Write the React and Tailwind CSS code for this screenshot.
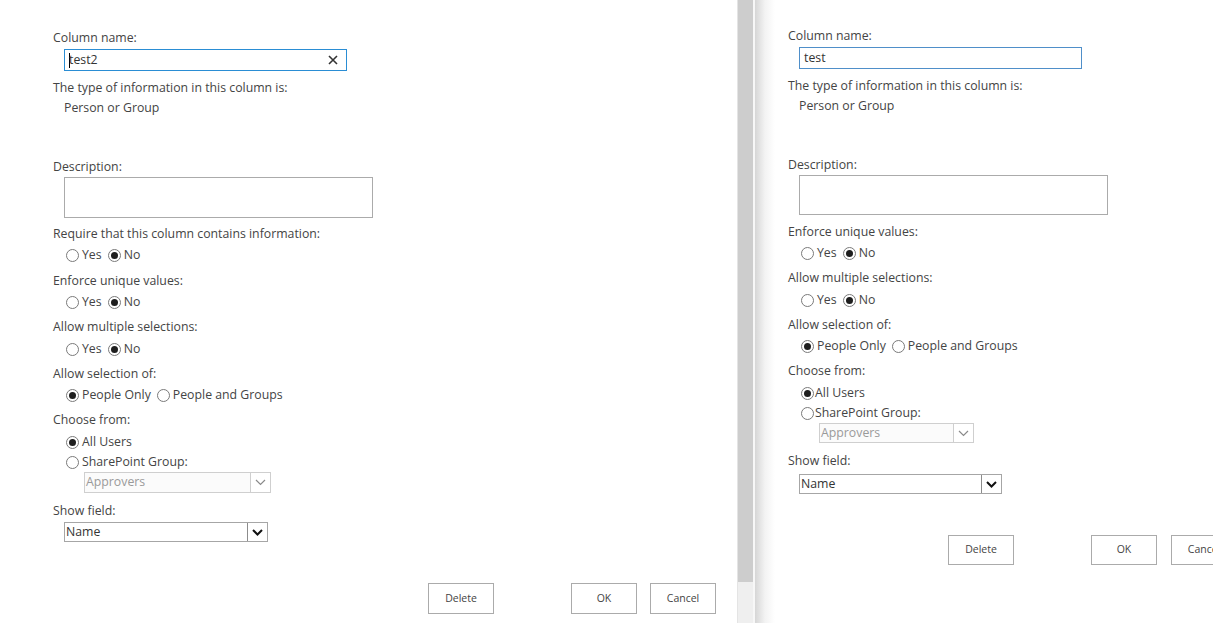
import React from 'react';

const Row = ({ className = '', children }) => (
  <div className={`h-5 leading-[21px] whitespace-nowrap ${className}`}>{children}</div>
);

const Radio = ({ checked, label, tight }) => (
  <span className="inline-flex items-center">
    <span className="w-[13px] h-[13px] rounded-full border border-[#7a7a7a] bg-white flex items-center justify-center">
      {checked && <span className="w-[7px] h-[7px] rounded-full bg-[#1e1e1e]" />}
    </span>
    <span className={tight ? 'ml-[1px]' : 'ml-[3px]'}>{label}</span>
  </span>
);

const RadioRow = ({ className = '', children }) => (
  <div className={`h-5 flex items-center gap-[6px] pl-[13px] whitespace-nowrap ${className}`}>{children}</div>
);

const Chevron = ({ disabled }) => (
  <svg width="11" height="7" viewBox="0 0 11 7">
    <polyline
      points="1,1 5.5,5.5 10,1"
      fill="none"
      stroke={disabled ? '#8a8a8a' : '#111'}
      strokeWidth={disabled ? 1.2 : 2}
    />
  </svg>
);

const Select = ({ value, width, disabled, className = '', h }) => (
  <div
    className={`flex items-stretch border ${h} ${className} ${
      disabled ? 'border-[#cfcfcf] bg-[#fbfbfb] text-[#9a9a9a]' : 'border-[#a6a6a6] bg-white text-[#333]'
    }`}
    style={{ width }}
  >
    <div className="flex-1 flex items-center pl-[1px] leading-none">{value}</div>
    <div
      className={`w-[20px] flex items-center justify-center border-l ${
        disabled ? 'border-[#cfcfcf] bg-white' : 'border-[#8c8c8c] bg-white'
      }`}
    >
      <Chevron disabled={disabled} />
    </div>
  </div>
);

const Button = ({ children, className = '', h }) => (
  <div
    className={`w-[66px] shrink-0 ${h} border border-[#ababab] bg-white flex items-center justify-center text-[10.5px] text-[#444] ${className}`}
  >
    {children}
  </div>
);

const Form = ({ right }) => {
  return (
    <div className={right ? 'pt-[25px] pl-[33px]' : 'pt-[27px] pl-[53px]'}>
      <Row>Column name:</Row>
      <div
        className={`mt-[2px] ml-[11px] w-[283px] h-[22px] border bg-white flex items-center px-[4px] ${
          right ? 'border-[#4f8fc9]' : 'border-[#2a8dd4]'
        }`}
      >
        {!right && <span className="w-[1px] h-[15px] bg-black -mr-[1px]" />}
        <span className="flex-1 text-[#333]">{right ? 'test' : 'test2'}</span>
        {!right && (
          <svg width="10" height="10" viewBox="0 0 10 10" className="mr-[4px]">
            <path d="M1 1 L9 9 M9 1 L1 9" stroke="#333" strokeWidth="1.6" />
          </svg>
        )}
      </div>
      <Row className="mt-[6px]">The type of information in this column is:</Row>
      <Row className="pl-[11px]">Person or Group</Row>
      <Row className="mt-[39px]">Description:</Row>
      <div className={`mt-[1px] ml-[11px] w-[309px] border border-[#ababab] bg-white ${right ? 'h-[40px]' : 'h-[41px]'}`} />
      {!right && (
        <>
          <Row className="mt-[5px]">Require that this column contains information:</Row>
          <RadioRow className="mt-[2px]">
            <Radio label="Yes" />
            <Radio checked label="No" />
          </RadioRow>
        </>
      )}
      <Row className={right ? 'mt-[6px]' : 'mt-[5px]'}>Enforce unique values:</Row>
      <RadioRow className="mt-[2px]">
        <Radio label="Yes" />
        <Radio checked label="No" />
      </RadioRow>
      <Row className="mt-[4px]">Allow multiple selections:</Row>
      <RadioRow className="mt-[3px]">
        <Radio label="Yes" />
        <Radio checked label="No" />
      </RadioRow>
      <Row className="mt-[4px]">Allow selection of:</Row>
      <RadioRow className="mt-[2px]">
        <Radio checked label="People Only" />
        <Radio label="People and Groups" />
      </RadioRow>
      <Row className="mt-[4px]">Choose from:</Row>
      <RadioRow className="mt-[3px]">
        <Radio checked label="All Users" tight={right} />
      </RadioRow>
      <RadioRow>
        <Radio label="SharePoint Group:" tight={right} />
      </RadioRow>
      <Select
        value="Approvers"
        disabled
        width={right ? 155 : 187}
        h={right ? 'h-[20px]' : 'h-[21px]'}
        className="ml-[31px]"
      />
      <Row className="mt-[7px]">Show field:</Row>
      <Select value="Name" width={right ? 203 : 204} h="h-[20px]" className={right ? 'ml-[11px] mt-[4px]' : 'ml-[11px] mt-[2px]'} />
      <div className={`flex items-center whitespace-nowrap ${right ? 'mt-[41px]' : 'mt-[41px]'}`}>
        <Button h={right ? 'h-[30px]' : 'h-[31px]'} className={right ? 'ml-[160px]' : 'ml-[375px]'}>
          Delete
        </Button>
        <Button h={right ? 'h-[30px]' : 'h-[31px]'} className="ml-[77px]">
          OK
        </Button>
        <Button h={right ? 'h-[30px]' : 'h-[31px]'} className={right ? 'ml-[14px]' : 'ml-[13px]'}>
          Cancel
        </Button>
      </div>
    </div>
  );
};

export default function App() {
  return (
    <div className="flex w-[1213px] h-[623px] overflow-hidden bg-white text-[12.3px] text-[#444] font-['Segoe_UI','Open_Sans',sans-serif]">
      <div className="w-[737px] shrink-0 bg-white">
        <Form />
      </div>

      {/* scrollbar */}
      <div className="w-[16px] shrink-0 flex flex-col bg-[#efefef] border-l border-[#e4e4e4]">
        <div className="h-[582px] bg-[#cdcdcd]" />
      </div>
      <div className="w-[2px] shrink-0 bg-[#f7f7f7]" />

      <div className="flex-1 min-w-0 overflow-hidden bg-[linear-gradient(to_right,#d6d6d6,#f3f3f3_10px,#ffffff_20px)]">
        <Form right />
      </div>
    </div>
  );
}
